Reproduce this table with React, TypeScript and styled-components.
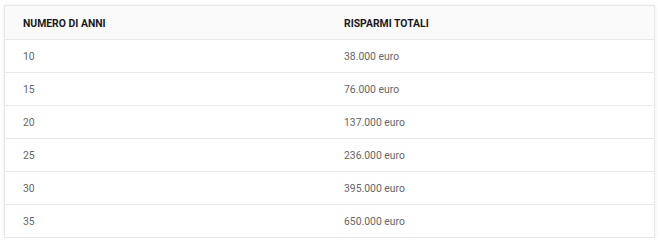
import React from "react";
import styled, { createGlobalStyle } from "styled-components";

const Global = createGlobalStyle`
  html, body { margin: 0; padding: 0; background: #fff; }
  body { font-family: Roboto, "Noto Sans", Arial, sans-serif; }
`;

const Page = styled.div`
  padding: 5px 0 0 4px;
`;

const Table = styled.div`
  width: 649px;
  border: 1px solid #e8e8e8;
  box-shadow: 0 0 4px rgba(0, 0, 0, 0.08);
  background: #fff;
`;

const Row = styled.div<{ $head?: boolean }>`
  display: grid;
  grid-template-columns: 321px 1fr;
  height: 33px;
  align-items: center;
  background: ${(p) => (p.$head ? "#fafafa" : "#fff")};
  border-top: ${(p) => (p.$head ? "none" : "1px solid #e9e9e9")};
  box-sizing: border-box;
`;

const Cell = styled.div<{ $head?: boolean }>`
  padding-left: 18px;
  font-size: 10.4px;
  font-weight: ${(p) => (p.$head ? 700 : 400)};
  color: ${(p) => (p.$head ? "#1a1a1a" : "#666")};
  white-space: nowrap;
  padding-top: ${(p) => (p.$head ? "1px" : "0")};
`;

const rows: [string, string][] = [
  ["10", "38.000 euro"],
  ["15", "76.000 euro"],
  ["20", "137.000 euro"],
  ["25", "236.000 euro"],
  ["30", "395.000 euro"],
  ["35", "650.000 euro"],
];

export default function App() {
  return (
    <>
      <Global />
      <Page>
        <Table>
          <Row $head>
            <Cell $head>NUMERO DI ANNI</Cell>
            <Cell $head>RISPARMI TOTALI</Cell>
          </Row>
          {rows.map(([a, b]) => (
            <Row key={a}>
              <Cell>{a}</Cell>
              <Cell>{b}</Cell>
            </Row>
          ))}
        </Table>
      </Page>
    </>
  );
}
